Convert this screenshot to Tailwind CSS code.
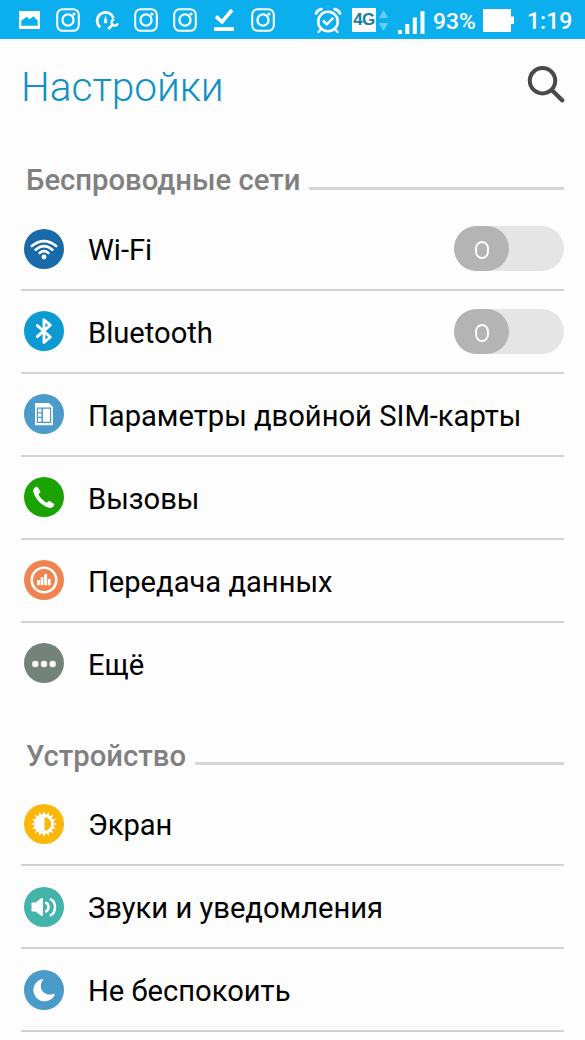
<!DOCTYPE html>
<html lang="ru">
<head>
<meta charset="utf-8">
<title>Настройки</title>
<script src="https://cdn.jsdelivr.net/npm/@tailwindcss/browser@4"></script>
</head>
<body class="w-[585px] h-[1040px] overflow-hidden bg-[#fdfdfd] font-['Roboto','Noto_Sans',sans-serif] text-black">
<svg class="hidden">
  <symbol id="insta" viewBox="0 0 24 24"><g fill="none" stroke="#fff" stroke-width="2"><rect x="1.2" y="1.2" width="21.6" height="21.6" rx="5.5"/><circle cx="12" cy="12" r="5.6" stroke-width="2.2"/></g><circle cx="18" cy="6" r="1.6" fill="#fff"/></symbol>
</svg>
<header class="h-[39px] bg-[#0cafee] flex items-center text-white">
  <svg class="w-[21px] h-[18px] ml-[19px] mt-px" viewBox="0 0 21 18"><path fill="#fff" fill-rule="evenodd" d="M0 0H21V18H0ZM2.3 14.8H18.7V9.5L14.3 5.2L10.6 8.2L7.6 5.8L2.3 9.8Z"/></svg>
  <svg class="size-6 ml-4 mt-px"><use href="#insta"/></svg>
  <svg class="w-6 h-[22px] ml-[15px]" viewBox="0 0 24 22" fill="none" stroke="#fff"><path stroke-width="2.7" d="M5.4 18.2A8.3 8.3 0 1 1 18.4 9.2"/><path stroke="none" fill="#fff" d="M10.5 6L12.2 12.5Q12.2 14.6 10.5 14.6Q8.8 14.6 8.8 12.5Z"/><path stroke-width="2.5" d="M13.2 20L18.6 14.8"/><path stroke-width="2.2" d="M19.2 10.3A3.2 3.2 0 1 0 22.8 14.4"/></svg>
  <svg class="size-6 ml-[15px] mt-px"><use href="#insta"/></svg>
  <svg class="size-6 ml-[15px] mt-px"><use href="#insta"/></svg>
  <svg class="w-5 h-6 ml-[17px] mt-px" viewBox="0 0 20 24"><path d="M2 8.4L8 14L18 2" fill="none" stroke="#fff" stroke-width="3.6"/><path fill="#fff" d="M0 19.2H20V23H0Z"/></svg>
  <svg class="size-6 ml-[17px] mt-px"><use href="#insta"/></svg>
  <svg class="w-[28px] h-[27px] ml-[39px] mt-px" viewBox="0 0 28 27" fill="none" stroke="#fff"><circle cx="14" cy="14.5" r="9.8" stroke-width="2.6"/><path stroke-width="2.8" stroke-linecap="round" d="M2 6.5Q3.3 3 7.4 2.2M26 6.5Q24.7 3 20.6 2.2"/><path stroke-width="2.2" stroke-linecap="round" d="M6.8 22.4L4.4 25M21.2 22.4L23.6 25"/><path stroke-width="2.5" d="M9 13.5L12.8 17.3L19.2 10.8"/></svg>
  <div class="ml-[10px] mt-px w-6 h-6 bg-white text-[#167f9f] font-bold text-[17px] leading-6 text-center tracking-[-0.5px] font-['Liberation_Sans',sans-serif]">4G</div>
  <svg class="w-[9px] h-[21px] ml-[3px] mt-px" viewBox="0 0 9 21"><path fill="#69cdf4" d="M4.5 0L9 8H0ZM4.5 21L0 13H9Z"/></svg>
  <svg class="w-[28px] h-6 ml-[9px] mt-1" viewBox="0 0 28 24"><path fill="#fff" d="M1 20H5V24H1ZM8.3 14H12.3V24H8.3ZM15.8 7.5H19.8V24H15.8ZM23.5 1H27.5V24H23.5Z"/></svg>
  <span class="ml-[8px] w-[42px] text-[22.8px] leading-[39px] mt-[3px] whitespace-nowrap font-medium">93%</span>
  <svg class="w-[31px] h-[23px] ml-[8px] mt-[2px]" viewBox="0 0 31 23"><path fill="#fff" d="M0 0H28V7.5H31V15H28V23H0Z"/></svg>
  <span class="ml-[13px] text-[23px] leading-[39px] mt-[3px] whitespace-nowrap font-medium">1:19</span>
</header>
<main class="pl-[21px] pr-[21px]">
  <div class="h-[111px] flex justify-between">
    <h1 class="text-[40.6px] leading-[48px] mt-[24px] font-light text-[#1091c4] whitespace-nowrap">Настройки</h1>
    <svg class="w-[38px] h-[38px] mt-[26px] -mr-[1px]" viewBox="0 0 38 38" fill="none" stroke="#4a4a4a"><circle cx="15.5" cy="15.7" r="12.7" stroke-width="4"/><path d="M25 25.3L35.2 35.3" stroke-width="4.4" stroke-linecap="round"/></svg>
  </div>
  <section>
    <div class="h-[58px] flex pl-[5px]">
      <h2 class="text-[29.25px] leading-[34px] mt-[13px] font-medium text-[#808080] whitespace-nowrap">Беспроводные сети</h2>
      <div class="flex-1 h-[3px] mt-[37px] ml-[9px] bg-[#d4d5d6]"></div>
    </div>
    <div class="h-[83px] border-b-2 border-[#d2d2d2] flex items-center pl-[3px]">
      <svg class="size-10" viewBox="0 0 40 40"><circle cx="20" cy="20" r="20" fill="#186aa9"/><g fill="none" stroke="#fff" stroke-width="2.6" stroke-linecap="round"><path d="M7.8 17Q20 7.2 32.2 17M11.6 20.7Q20 13.7 28.4 20.7M15.6 24Q20 20.4 24.4 24"/></g><circle cx="20" cy="28" r="2.4" fill="#fff"/></svg>
      <span class="ml-6 text-[29.15px] leading-[34px] mt-[2px] flex-1">Wi-Fi</span>
      <div class="w-[110px] h-[45px] rounded-full bg-[#e5e5e5]"><div class="w-[55px] h-[45px] rounded-full bg-[#b4b4b4] flex items-center justify-center"><svg class="w-[14px] h-[18px] mt-[3px]" viewBox="0 0 14 18"><rect x="1" y="1" width="12" height="16" rx="6" ry="6.5" fill="none" stroke="#fff" stroke-width="1.9"/></svg></div></div>
    </div>
    <div class="h-[83px] border-b-2 border-[#d2d2d2] flex items-center pl-[3px]">
      <svg class="size-10 -mt-px" viewBox="0 0 40 40"><circle cx="20" cy="20" r="20" fill="#0b9bd2"/><path fill="none" stroke="#fff" stroke-width="2.9" stroke-linejoin="round" stroke-linecap="round" d="M13.3 14.5L26.3 26L20 31.5V8.8L26.3 14.2L13.3 25.6"/></svg>
      <span class="ml-6 text-[29.15px] leading-[34px] mt-[2px] flex-1">Bluetooth</span>
      <div class="w-[110px] h-[45px] rounded-full bg-[#e5e5e5]"><div class="w-[55px] h-[45px] rounded-full bg-[#b4b4b4] flex items-center justify-center"><svg class="w-[14px] h-[18px] mt-[3px]" viewBox="0 0 14 18"><rect x="1" y="1" width="12" height="16" rx="6" ry="6.5" fill="none" stroke="#fff" stroke-width="1.9"/></svg></div></div>
    </div>
    <div class="h-[83px] border-b-2 border-[#d2d2d2] flex items-center pl-[3px]">
      <svg class="size-10 -mt-px" viewBox="0 0 40 40"><circle cx="20" cy="20" r="20" fill="#4a9aca"/><path fill="#fff" fill-rule="evenodd" d="M11 9H25L29 13V31.3H11ZM12.8 13.6V28.9H27.2V13.6Z"/><path fill="#fff" fill-rule="evenodd" d="M14 14.8H26V27.7H14ZM17.4 14.8V27.7H18.9V14.8ZM14 18.2V19.4H17.4V18.2ZM14 22.8V24H17.4V22.8Z"/></svg>
      <span class="ml-6 text-[29.15px] leading-[34px] mt-[2px] whitespace-nowrap">Параметры двойной SIM-карты</span>
    </div>
    <div class="h-[83px] border-b-2 border-[#d2d2d2] flex items-center pl-[3px]">
      <svg class="size-10 -mt-px" viewBox="0 0 40 40"><circle cx="20" cy="20" r="20" fill="#1ba303"/><path fill="#fff" d="M9.2 14.5C8.7 12.4 10.5 10.8 12 9.8C13 9.4 13.5 10 14 10.8L16.2 14.3C16.6 15.2 16.2 15.8 15.4 16.3C14.6 16.9 14.5 17.5 15 18.3C17 21.5 19 23.6 21.7 25.2C22.6 25.7 23.2 25.5 23.8 24.8C24.4 24 25.1 23.8 26 24.3L29.6 26.5C30.4 27 30.5 27.7 30 28.5C29 30.3 27.1 31.4 24.9 30.8C17.5 28.4 11.5 22.5 9.2 14.5Z"/></svg>
      <span class="ml-6 text-[29.15px] leading-[34px] mt-[2px]">Вызовы</span>
    </div>
    <div class="h-[83px] border-b-2 border-[#d2d2d2] flex items-center pl-[3px]">
      <svg class="size-10 -mt-px" viewBox="0 0 40 40"><circle cx="20" cy="20" r="20" fill="#f0834f"/><circle cx="20" cy="20" r="12.3" fill="none" stroke="#fff" stroke-width="2.6"/><path fill="#fff" d="M13 20H15.9V25.2H13ZM16.6 17H19.5V25.2H16.6ZM20.2 14H23.1V25.2H20.2ZM23.8 19H26.7V25.2H23.8Z"/></svg>
      <span class="ml-6 text-[29.15px] leading-[34px] mt-[2px]">Передача данных</span>
    </div>
    <div class="h-[83px] flex items-center pl-[3px] pb-[2px]">
      <svg class="size-10 -mt-px" viewBox="0 0 40 40"><circle cx="20" cy="20" r="20" fill="#74837a"/><g fill="#fff"><circle cx="11.3" cy="21" r="3.2"/><circle cx="20" cy="21" r="3.2"/><circle cx="28.7" cy="21" r="3.2"/></g></svg>
      <span class="ml-6 text-[29.15px] leading-[34px] mt-[2px]">Ещё</span>
    </div>
  </section>
  <section>
    <div class="h-[77px] flex pl-[5px]">
      <h2 class="text-[29.25px] leading-[34px] mt-[33px] font-medium text-[#808080] whitespace-nowrap">Устройство</h2>
      <div class="flex-1 h-[3px] mt-[56px] ml-[9px] bg-[#d4d5d6]"></div>
    </div>
    <div class="h-[83px] border-b-2 border-[#d2d2d2] flex items-center pl-[3px]">
      <svg class="size-10" viewBox="0 0 40 40"><circle cx="20" cy="20" r="20" fill="#fbb80b"/><path fill="#fff" transform="translate(20 20)" d="M12.7 0L9 1.8L11.7 4.9L7.65 5.1L9 9L5.1 7.65L4.9 11.7L1.8 9L0 12.7L-1.8 9L-4.9 11.7L-5.1 7.65L-9 9L-7.65 5.1L-11.7 4.9L-9 1.8L-12.7 0L-9 -1.8L-11.7 -4.9L-7.65 -5.1L-9 -9L-5.1 -7.65L-4.9 -11.7L-1.8 -9L0 -12.7L1.8 -9L4.9 -11.7L5.1 -7.65L9 -9L7.65 -5.1L11.7 -4.9L9 -1.8Z"/><path fill="#fbb80b" d="M20.5 13.3A6.7 6.7 0 0 1 20.5 26.7Z"/></svg>
      <span class="ml-6 text-[29.15px] leading-[34px] mt-[3px]">Экран</span>
    </div>
    <div class="h-[83px] border-b-2 border-[#d2d2d2] flex items-center pl-[3px]">
      <svg class="size-10" viewBox="0 0 40 40"><circle cx="20" cy="20" r="20" fill="#43b4aa"/><path fill="#fff" d="M7.5 15.5H11.5L17.5 11Q19 10.5 19 12.5V27.5Q19 29.5 17.5 29L11.5 24.5H7.5Z"/><path fill="none" stroke="#fff" stroke-width="2.5" stroke-linecap="round" d="M22 16Q24.5 16.5 24.5 20Q24.5 23.5 22 24.5M26.8 12.3Q31 14.5 31 20Q31 26 26.8 28.2"/></svg>
      <span class="ml-6 text-[29.15px] leading-[34px] mt-[3px]">Звуки и уведомления</span>
    </div>
    <div class="h-[83px] border-b-2 border-[#d2d2d2] flex items-center pl-[3px]">
      <svg class="size-10" viewBox="0 0 40 40"><circle cx="20" cy="20" r="20" fill="#4a9aca"/><path fill="#fff" d="M18.3 9A11.3 11.3 0 1 0 30.8 25Q30.5 23.4 28.8 24C22 26.2 16.5 21 16.8 15.5C16.9 13 17.9 11.5 19 10Q19.6 8.6 18.3 9Z"/></svg>
      <span class="ml-6 text-[29.15px] leading-[34px] mt-[2px]">Не беспокоить</span>
    </div>
  </section>
</main>
</body>
</html>
